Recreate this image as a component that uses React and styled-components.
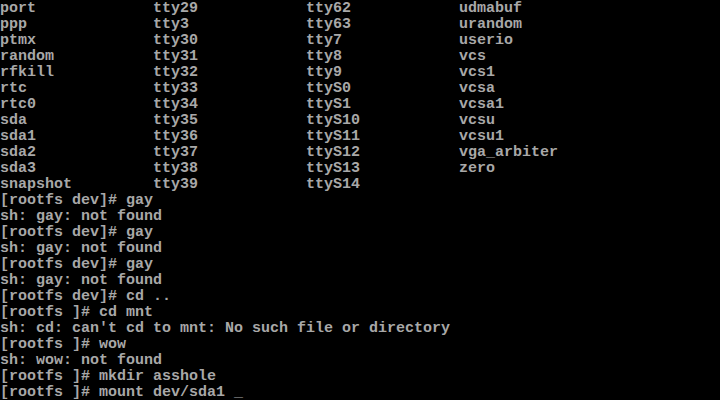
import React from "react";
import styled, { createGlobalStyle } from "styled-components";

const Global = createGlobalStyle`
  html, body { margin: 0; padding: 0; background: #000; }
  #root { width: 720px; height: 400px; }
`;

const Screen = styled.div`
  width: 720px;
  height: 400px;
  box-sizing: border-box;
  padding-top: 1px;
  background: #000;
  color: #a8a8a8;
  font-family: "Liberation Mono", "DejaVu Sans Mono", monospace;
  font-size: 15px;
  font-weight: bold;
  line-height: 16px;
  overflow: hidden;
  display: flex;
  flex-direction: column;
`;

const LsGrid = styled.div`
  display: grid;
  grid-template-columns: repeat(4, 153px);
  grid-auto-flow: column;
  grid-template-rows: repeat(12, 16px);
`;

const Cell = styled.div`
  white-space: pre;
  height: 16px;
`;

const Line = styled.div`
  white-space: pre;
  height: 16px;
`;

const Cursor = styled.span`
  color: #a8a8a8;
`;

const cols = [
  ["port", "ppp", "ptmx", "random", "rfkill", "rtc", "rtc0", "sda", "sda1", "sda2", "sda3", "snapshot"],
  ["tty29", "tty3", "tty30", "tty31", "tty32", "tty33", "tty34", "tty35", "tty36", "tty37", "tty38", "tty39"],
  ["tty62", "tty63", "tty7", "tty8", "tty9", "ttyS0", "ttyS1", "ttyS10", "ttyS11", "ttyS12", "ttyS13", "ttyS14"],
  ["udmabuf", "urandom", "userio", "vcs", "vcs1", "vcsa", "vcsa1", "vcsu", "vcsu1", "vga_arbiter", "zero", ""],
];

const lines = [
  "[rootfs dev]# gay",
  "sh: gay: not found",
  "[rootfs dev]# gay",
  "sh: gay: not found",
  "[rootfs dev]# gay",
  "sh: gay: not found",
  "[rootfs dev]# cd ..",
  "[rootfs ]# cd mnt",
  "sh: cd: can't cd to mnt: No such file or directory",
  "[rootfs ]# wow",
  "sh: wow: not found",
  "[rootfs ]# mkdir asshole",
];

export default function App() {
  return (
    <>
      <Global />
      <Screen>
        <LsGrid>
          {cols.flatMap((c, ci) => c.map((n, ri) => <Cell key={ci + "-" + ri}>{n}</Cell>))}
        </LsGrid>
        {lines.map((l, i) => (
          <Line key={i}>{l}</Line>
        ))}
        <Line>
          [rootfs ]# mount dev/sda1 <Cursor>_</Cursor>
        </Line>
      </Screen>
    </>
  );
}
